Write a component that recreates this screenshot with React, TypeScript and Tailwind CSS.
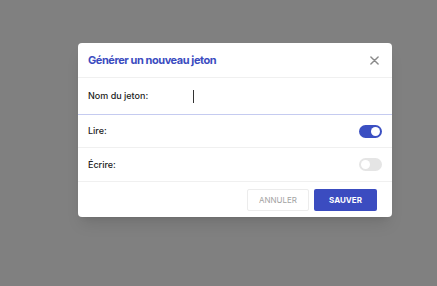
import React, { useState } from 'react';

const Toggle: React.FC<{ on: boolean; onChange: () => void }> = ({ on, onChange }) => (
  <button
    onClick={onChange}
    className={`relative w-[23px] h-[13px] rounded-full transition-colors ${on ? 'bg-[#3b4fc2]' : 'bg-[#e5e5e5]'}`}
  >
    <span
      className={`absolute top-[2px] w-[9px] h-[9px] rounded-full bg-white ${on ? 'left-[12px]' : 'left-[2px]'}`}
    />
  </button>
);

export default function App() {
  const [read, setRead] = useState(true);
  const [write, setWrite] = useState(false);

  return (
    <div className="w-[437px] h-[286px] bg-[#808080] flex items-start pl-[78px] pt-[43px] font-['Inter',sans-serif]">
      <div className="w-[314px] bg-white rounded-[4px] shadow-lg flex flex-col">
        {/* Header */}
        <div className="h-[35px] px-[10px] flex items-center justify-between border-b border-[#f0f0f0]">
          <h2 className="text-[11px] font-bold tracking-[-0.04em] text-[#3b4cc0]">Générer un nouveau jeton</h2>
          <button className="text-[#8a8a8a] pr-[3px]">
            <svg width="9" height="9" viewBox="0 0 10 10" stroke="currentColor" strokeWidth="1.6" strokeLinecap="round">
              <path d="M1 1L9 9M9 1L1 9" />
            </svg>
          </button>
        </div>

        {/* Name */}
        <div className="h-[37px] px-[10px] flex items-center border-b border-[#c5cbf0]">
          <label className="w-[105px] text-[9px] font-medium text-[#222]">Nom du jeton:</label>
          <div className="w-px h-[13px] bg-[#333]" />
        </div>

        {/* Read */}
        <div className="h-[33px] px-[10px] flex items-center justify-between border-b border-[#f0f0f0]">
          <span className="text-[9px] font-medium text-[#222]">Lire:</span>
          <Toggle on={read} onChange={() => setRead(!read)} />
        </div>

        {/* Write */}
        <div className="h-[34px] px-[10px] flex items-center justify-between border-b border-[#f0f0f0]">
          <span className="text-[9px] font-medium text-[#222]">Écrire:</span>
          <Toggle on={write} onChange={() => setWrite(!write)} />
        </div>

        {/* Footer */}
        <div className="h-[35px] px-[15px] flex items-center justify-end gap-[5px]">
          <button className="w-[62px] h-[22px] border border-[#ececec] rounded-[2px] text-[8px] text-[#a3a3a3] uppercase">
            Annuler
          </button>
          <button className="w-[63px] h-[22px] bg-[#3b4cc0] rounded-[2px] text-[8px] font-bold text-white uppercase">
            Sauver
          </button>
        </div>
      </div>
    </div>
  );
}
